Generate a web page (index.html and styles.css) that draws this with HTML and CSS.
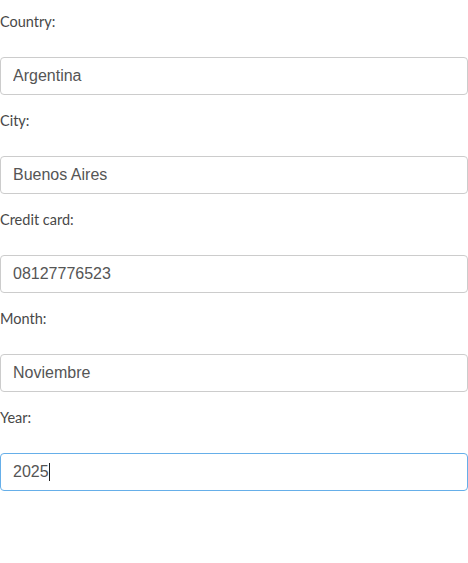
FILE: index.html
```html
<!DOCTYPE html>
<html lang="es">
<head>
<meta charset="utf-8">
<title>Form</title>
<link rel="stylesheet" href="styles.css">
</head>
<body>
<form class="form">
  <div class="group">
    <label class="label" for="country">Country:</label>
    <input class="field" id="country" type="text" value="Argentina">
  </div>
  <div class="group">
    <label class="label" for="city">City:</label>
    <input class="field" id="city" type="text" value="Buenos Aires">
  </div>
  <div class="group">
    <label class="label" for="card">Credit card:</label>
    <input class="field" id="card" type="text" value="08127776523">
  </div>
  <div class="group">
    <label class="label" for="month">Month:</label>
    <input class="field" id="month" type="text" value="Noviembre">
  </div>
  <div class="group">
    <label class="label" for="year">Year:</label>
    <div class="field field-focused"><span class="field-text">2025</span><span class="caret"></span></div>
  </div>
</form>
</body>
</html>
```
FILE: styles.css
```css
html, body {
  margin: 0;
  padding: 0;
  background: #fff;
}
.form {
  display: flex;
  flex-direction: column;
  gap: 4px;
  width: 468px;
}
.group {
  display: flex;
  flex-direction: column;
}
.label {
  display: block;
  padding-top: 12px;
  margin-bottom: 25px;
  font-family: Lato, "Noto Sans", sans-serif;
  font-size: 14.5px;
  line-height: 20px;
  color: #484848;
}
.field {
  box-sizing: border-box;
  display: flex;
  align-items: center;
  width: 468px;
  height: 38px;
  margin: 0;
  padding: 0 12px;
  border: 1px solid #ccc;
  border-radius: 4px;
  background: #fff;
  font-family: "Liberation Sans", Arial, sans-serif;
  font-size: 16px;
  color: #555;
  outline: none;
}
.field-focused {
  border-color: #66afe9;
}
.field-text {
  line-height: 20px;
}
.caret {
  display: inline-block;
  width: 1px;
  height: 18px;
  background: #222;
}
```
